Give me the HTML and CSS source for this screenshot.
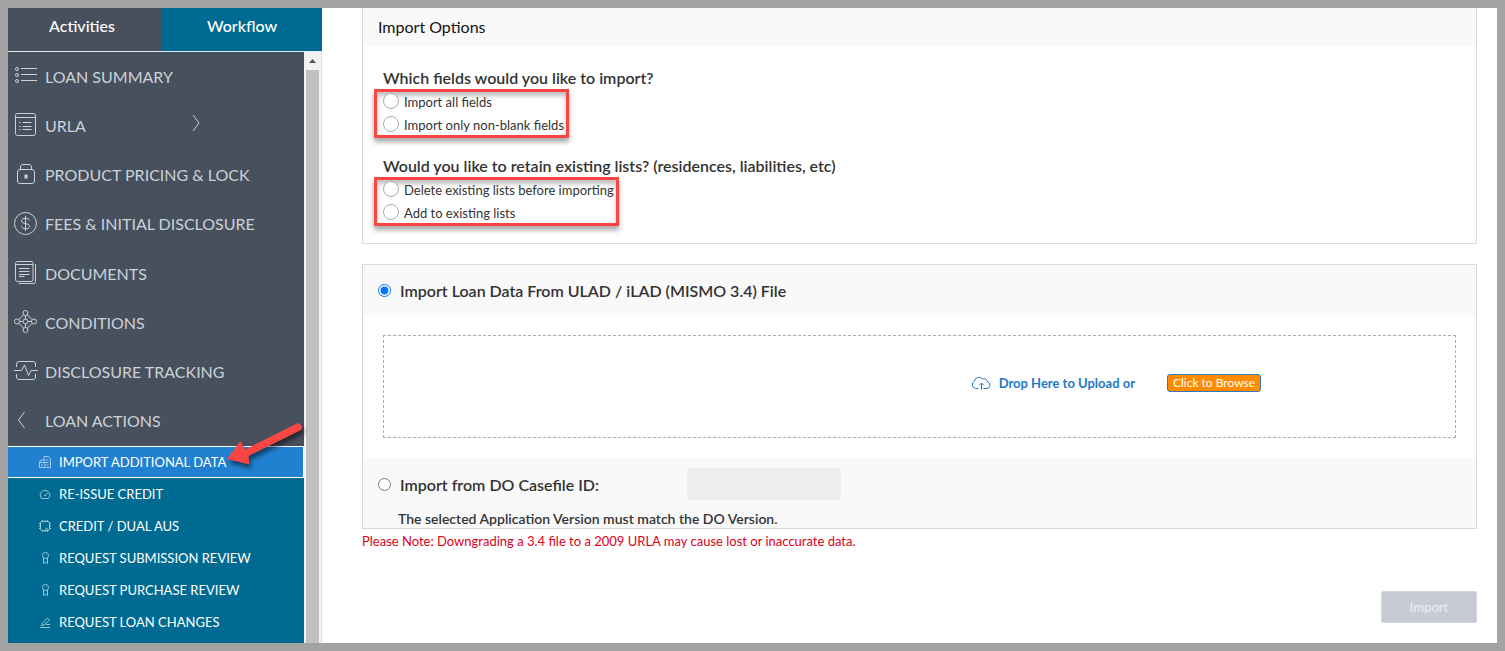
FILE: index.html
```html
<!DOCTYPE html>
<html lang="en">
<head>
    <meta charset="UTF-8">
    <meta name="viewport" content="width=device-width, initial-scale=1.0">
    <title>Import Additional Data</title>
    <link rel="stylesheet" href="styles.css">
</head>
<body>
    <aside class="sidebar">
        <div class="tabs">
            <button type="button" class="tab">Activities</button>
            <button type="button" class="tab active">Workflow</button>
        </div>
        <div class="menu-area">
            <nav class="menu">
                <ul class="main-menu">
                    <li><a href="#">
                        <svg class="icon" viewBox="0 0 24 24"><circle cx="3" cy="5" r="1.5"/><circle cx="3" cy="11" r="1.5"/><circle cx="3" cy="17" r="1.5"/><path d="M7 4.5h16M7 10.5h16M7 16.5h16"/></svg>
                        <span>LOAN SUMMARY</span>
                    </a></li>
                    <li><a href="#">
                        <svg class="icon" viewBox="0 0 24 24"><rect x="1.5" y="0.5" width="20" height="22" rx="2"/><path d="M1.5 4.5h20M8.500 9.500h9M8.500 13.500h9M8.500 16.500h9M5 9.500h1.500M5 13.500h1.500M5 16.500h1.500"/></svg>
                        <span>URLA</span>
                        <svg class="chevron" viewBox="0 0 8 22"><path d="M1 1l6 8-6 8"/></svg>
                    </a></li>
                    <li><a href="#">
                        <svg class="icon" viewBox="0 0 24 24"><rect x="3.500" y="6.500" width="17" height="14" rx="2.500"/><path d="M6.500 6.500V4a2.500 2.500 0 0 1 2.500-2.500h6A2.500 2.500 0 0 1 17.500 4v2.500"/><path class="solid" d="M10.500 11.500h3v4h-3z"/></svg>
                        <span>PRODUCT PRICING &amp; LOCK</span>
                    </a></li>
                    <li><a href="#">
                        <svg class="icon" viewBox="0 0 24 24"><circle cx="11.500" cy="11.500" r="11"/><path d="M11.500 4v15M15.500 8.500c-.5-1.500-2-2.200-4-2.200-2.300 0-4 .9-4 2.600 0 3.700 8 1.700 8 5.400 0 1.700-1.700 2.500-4 2.500s-3.700-.8-4-2.600"/></svg>
                        <span>FEES &amp; INITIAL DISCLOSURE</span>
                    </a></li>
                    <li><a href="#">
                        <svg class="icon" viewBox="0 0 24 24"><rect x="1.500" y="0.500" width="17.500" height="20" rx="2"/><path d="M1.500 3.500H19M5 7.500h10.500M5 10.500h10.500M5 13.500h10.500M5 15.500h5.500M4.500 22.500h15a2 2 0 0 0 2-2V3"/></svg>
                        <span>DOCUMENTS</span>
                    </a></li>
                    <li><a href="#">
                        <svg class="icon" viewBox="0 0 24 24"><circle cx="11.500" cy="3" r="2.500"/><circle cx="11.500" cy="20" r="2.500"/><circle cx="3" cy="11.500" r="2.500"/><circle cx="20" cy="11.500" r="2.500"/><circle cx="11.500" cy="11.500" r="2.500"/><path d="M9.700 4.800L4.800 9.700M13.300 4.800l4.900 4.900M4.800 13.300l4.900 4.900M18.200 13.300l-4.900 4.900M11.500 5.500V9M11.500 14v3.500M5.500 11.500H9M14 11.500h3.500"/></svg>
                        <span>CONDITIONS</span>
                    </a></li>
                    <li><a href="#">
                        <svg class="icon" viewBox="0 0 24 24"><path d="M2.500 7V4a2.500 2.500 0 0 1 2.500-2.500h14A2.500 2.500 0 0 1 21.500 4v3M2.500 14v3A2.500 2.500 0 0 0 5 19.500h14a2.500 2.500 0 0 0 2.500-2.500v-3M0 10.500h7.500L10.500 5l4 10.500 2.500-5h7"/></svg>
                        <span>DISCLOSURE TRACKING</span>
                    </a></li>
                    <li><a href="#">
                        <svg class="icon" viewBox="0 0 24 24"><path d="M10.500 3l-6 8 6 8"/></svg>
                        <span>LOAN ACTIONS</span>
                    </a></li>
                </ul>
                <ul class="sub-menu">
                    <li><a href="#" class="selected">
                        <svg class="small-icon" viewBox="0 0 12 12"><path d="M5 4V.5h4.500l2 2v9H7M5 4H1.500L.5 6.500v5H6V6.500L5 4M.5 6.500H6M3 8v2M7 4h2.500M7 6.500h2.500M7.500 9h2"/></svg>
                        <span>IMPORT ADDITIONAL DATA</span>
                    </a></li>
                    <li><a href="#">
                        <svg class="small-icon" viewBox="0 0 12 12"><path d="M3 10.500H9.500A4.800 4.800 0 1 0 2.500 10.500zM5.500 8l3-3M5 7.500h1.500"/></svg>
                        <span>RE-ISSUE CREDIT</span>
                    </a></li>
                    <li><a href="#">
                        <svg class="small-icon" viewBox="0 0 12 12"><rect x="1.500" y="1.500" width="9" height="9" rx="1.500"/><path d="M3.500 0v1.500M6 0v1.500M8.500 0v1.500M3.500 10.500V12M6 10.500V12M8.500 10.500V12M0 3.500h1.500M0 6h1.500M0 8.500h1.500M10.500 3.500H12M10.500 6H12M10.500 8.500H12M6 9h3"/></svg>
                        <span>CREDIT / DUAL AUS</span>
                    </a></li>
                    <li><a href="#">
                        <svg class="small-icon" viewBox="0 0 12 12"><circle cx="6.500" cy="3.500" r="3"/><path d="M4.500 6v5.500l2-1.500 2 1.500V6"/></svg>
                        <span>REQUEST SUBMISSION REVIEW</span>
                    </a></li>
                    <li><a href="#">
                        <svg class="small-icon" viewBox="0 0 12 12"><circle cx="6.500" cy="3.500" r="3"/><path d="M4.500 6v5.500l2-1.500 2 1.500V6"/></svg>
                        <span>REQUEST PURCHASE REVIEW</span>
                    </a></li>
                    <li><a href="#">
                        <svg class="small-icon" viewBox="0 0 12 12"><path d="M3 7.500L8.500 2 10.500 4 5 9 2.500 9.500zM1 11.500h10M7 8.500h4"/></svg>
                        <span>REQUEST LOAN CHANGES</span>
                    </a></li>
                </ul>
            </nav>
            <div class="scrollbar">
                <svg class="scroll-up" viewBox="0 0 17 18"><path d="M5 11h7L8.500 7z"/></svg>
                <div class="scroll-thumb"></div>
            </div>
        </div>
        <svg class="arrow" viewBox="0 0 84 56"><path d="M3 37L16.500 19l4.500 8.500L72 2a3.700 3.700 0 0 1 4 6.500L24.500 34l1 8.500z"/></svg>
    </aside>

    <main class="content">
        <section class="panel options-panel">
            <h2 class="panel-header">Import Options</h2>
            <div class="options">
                <h3 id="fields-title">Which fields would you like to import?</h3>
                <div class="option-group" role="radiogroup" aria-labelledby="fields-title">
                    <label><input type="radio" name="fields"> <span>Import all fields</span></label>
                    <label><input type="radio" name="fields"> <span>Import only non-blank fields</span></label>
                </div>
                <h3 id="lists-title">Would you like to retain existing lists? (residences, liabilities, etc)</h3>
                <div class="option-group" role="radiogroup" aria-labelledby="lists-title">
                    <label><input type="radio" name="lists"> <span>Delete existing lists before importing</span></label>
                    <label><input type="radio" name="lists"> <span>Add to existing lists</span></label>
                </div>
            </div>
        </section>

        <section class="panel">
            <div class="source-header">
                <input type="radio" name="source" id="source-file" checked>
                <label for="source-file">Import Loan Data From ULAD / iLAD (MISMO 3.4) File</label>
            </div>
            <div class="drop-area">
                <svg class="cloud" viewBox="0 0 20 14"><path d="M7.500 12.500H4.500A4 4 0 0 1 3.500 5 4.500 4.500 0 0 1 11.500 3a3.500 3.500 0 0 1 5 3 3.300 3.300 0 0 1-.5 6.500h-3.500M10.500 13.500V7M8 9.500L10.500 7 13 9.500"/></svg>
                <span class="drop-text">Drop Here to Upload or</span>
                <button type="button" class="browse-button">Click to Browse</button>
            </div>
            <div class="casefile">
                <div class="casefile-row">
                    <input type="radio" name="source" id="source-do">
                    <label for="source-do">Import from DO Casefile ID:</label>
                    <input type="text" class="casefile-id" aria-label="DO Casefile ID" disabled>
                </div>
                <p>The selected Application Version must match the DO Version.</p>
            </div>
        </section>
        <p class="note">Please Note: Downgrading a 3.4 file to a 2009 URLA may cause lost or inaccurate data.</p>
        <div class="actions">
            <button type="submit" class="import-button" disabled>Import</button>
        </div>
    </main>
</body>
</html>
```
FILE: styles.css
```css
* {
    box-sizing: border-box;
}
body {
    font-family: Lato, "Open Sans", sans-serif;
    display: flex;
    min-height: 100vh;
    margin: 0;
    border: 8px solid #a3a3a3;
    background-color: #fff;
    color: #333;
}
h2, h3, p, ul {
    margin: 0;
    padding: 0;
}
ul {
    list-style: none;
}
a {
    color: inherit;
    text-decoration: none;
}
button, input {
    font-family: inherit;
    margin: 0;
}

/* Sidebar */
.sidebar {
    position: relative;
    display: flex;
    flex-direction: column;
    width: 314px;
    flex-shrink: 0;
}
.tabs {
    display: flex;
    height: 44px;
    border-bottom: 1px solid #e4eef2;
}
.tab {
    width: 154px;
    border: none;
    padding: 0 6px 8px 0;
    background-color: #47505d;
    color: #fff;
    font-size: 16px;
    font-weight: 500;
    cursor: pointer;
}
.tab.active {
    flex: 1;
    padding-right: 0;
    background-color: #006b92;
}
.menu-area {
    display: flex;
    flex: 1;
}
.menu {
    display: flex;
    flex-direction: column;
    flex: 1;
    background-color: #47505d;
}
.main-menu {
    display: flex;
    flex-direction: column;
    flex: 1;
    color: #cdd1d8;
    font-size: 16px;
}
.main-menu li {
    display: flex;
    flex: 1;
}
.main-menu a {
    display: flex;
    align-items: center;
    flex: 1;
    padding: 0 0 1px 6px;
}
.icon {
    width: 24px;
    height: 24px;
    margin-right: 7px;
}
.icon, .chevron, .small-icon, .cloud {
    flex-shrink: 0;
    fill: none;
    stroke: currentColor;
}
.icon .solid {
    fill: currentColor;
    stroke: none;
}
.chevron {
    width: 8px;
    height: 22px;
    margin-left: auto;
    margin-right: 104px;
}
.sub-menu {
    padding-bottom: 5px;
    background-color: #006b92;
    color: #fff;
    font-size: 13px;
}
.sub-menu a {
    display: flex;
    align-items: center;
    height: 32px;
    padding: 0 0 1px 31px;
}
.sub-menu a.selected {
    border: 1px solid #fff;
    border-left: none;
    background-color: #2180cf;
}
.small-icon {
    width: 12px;
    height: 12px;
    margin-right: 8px;
    opacity: 0.6;
}
.scrollbar {
    width: 18px;
    display: flex;
    flex-direction: column;
    background-color: #f1f1f1;
    border-right: 1px solid #dfe1e4;
}
.scroll-up {
    width: 17px;
    height: 18px;
    fill: #505050;
}
.scroll-thumb {
    flex: 1;
    margin: 0 2px;
    background-color: #c1c1c1;
}
/* Callout pointing at the selected menu item */
.arrow {
    position: absolute;
    left: 216px;
    top: 414px;
    width: 84px;
    height: 56px;
    fill: #fb4444;
    filter: drop-shadow(2px 4px 2px rgba(0, 0, 0, 0.5));
}

/* Content */
.content {
    flex: 1;
    padding: 0 20px 20px 40px;
}
.panel {
    border: 1px solid #d9d9d9;
    margin-bottom: 20px;
}
.options-panel {
    border-top: none;
}
.panel-header {
    height: 38px;
    padding-left: 15px;
    background-color: #f9f9f9;
    color: #111;
    font-size: 16px;
    font-weight: 400;
    line-height: 38px;
}
.options {
    padding: 22px 20px 17px;
}
.options h3 {
    margin-bottom: 1px;
    font-size: 16px;
    font-weight: 600;
    line-height: 20px;
}
.options h3:not(:first-child) {
    margin-top: 18px;
}
.option-group {
    display: flex;
    flex-direction: column;
    gap: 5px;
    width: fit-content;
    margin-left: -9px;
    padding: 0 2px 2px 6px;
    border: 3px solid #fb4444;
    box-shadow: 0 4px 5px rgba(0, 0, 0, 0.35), inset 0 4px 4px rgba(0, 0, 0, 0.25);
}
.option-group label {
    display: flex;
    align-items: center;
    height: 18px;
    font-size: 13px;
}
.option-group span {
    padding-top: 2px;
}
.option-group input {
    appearance: none;
    width: 16px;
    height: 16px;
    margin-right: 5px;
    border: 1px solid #a5abb8;
    border-radius: 50%;
    background-color: #fff;
}
.option-group input:checked {
    border: 5px solid #0075ff;
}
.source-header {
    display: flex;
    align-items: center;
    height: 50px;
    padding-left: 15px;
    background-color: #f9f9f9;
}
.source-header label, .casefile-row label {
    margin-left: 9px;
    font-size: 16px;
    font-weight: 600;
}
.drop-area {
    display: flex;
    align-items: center;
    justify-content: flex-end;
    height: 103px;
    margin: 20px;
    padding: 0 194px 8px 0;
    border: 1px dashed #a9afba;
    color: #2378c8;
}
.cloud {
    width: 20px;
    height: 14px;
    margin-right: 8px;
}
.drop-text {
    font-size: 13px;
    font-weight: 700;
}
.browse-button {
    width: 94px;
    height: 18px;
    margin-left: 32px;
    padding: 0;
    border: 1px solid #337ab7;
    border-radius: 3px;
    background-color: #ff8c00;
    color: #fff;
    font-size: 12px;
    cursor: pointer;
}
.casefile {
    padding: 10px 15px 0;
    background-color: #f9f9f9;
}
.casefile-row {
    display: flex;
    align-items: center;
}
.casefile-row label {
    width: 287px;
}
.casefile-id {
    width: 154px;
    height: 32px;
    border: none;
    border-radius: 2px;
    background-color: #eee;
}
.casefile p {
    padding: 10px 0 0 20px;
    font-size: 14px;
    font-weight: 600;
    line-height: 18px;
}
.note {
    margin-top: -16px;
    color: #e2001a;
    font-size: 13px;
    line-height: 16px;
}
.actions {
    display: flex;
    justify-content: flex-end;
    margin-top: 42px;
}
.import-button {
    width: 96px;
    height: 32px;
    border: 1px solid #d3d6dc;
    border-radius: 2px;
    background-color: #c6cbd5;
    color: #e8eaee;
    font-size: 13px;
    font-weight: 600;
}
```
